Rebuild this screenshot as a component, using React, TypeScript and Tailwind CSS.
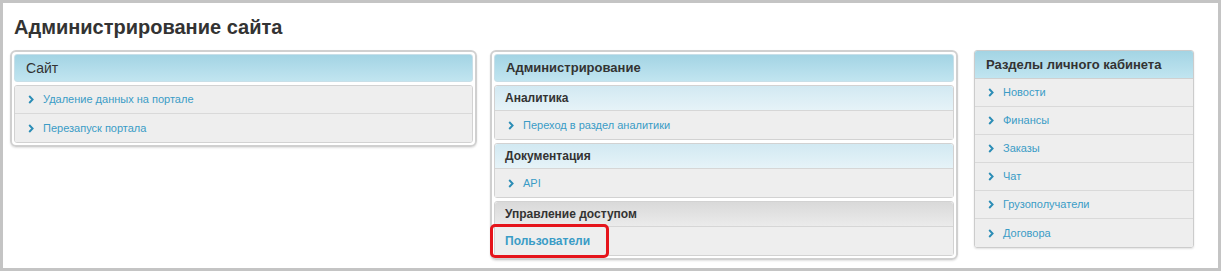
import React from 'react'

type LinkRowProps = {
    label: string;
    last?: boolean;
}

function Chevron() {
    return (
        <svg width="6" height="9" viewBox="0 0 6 9" className="shrink-0">
            <polyline points="1.2,1 4.6,4.5 1.2,8" fill="none" stroke="#2b8db6" strokeWidth="1.9" />
        </svg>
    )
}

function LinkRow({ label, last }: LinkRowProps) {
    return (
        <div
            className={
                last
                    ? "h-[28px] flex items-center pl-[13px] gap-[9px] bg-[#eeeeee]"
                    : "h-[28px] flex items-center pl-[13px] gap-[9px] bg-[#eeeeee] border-b border-[#d9d9d9] shadow-[0_1px_0_#ffffff]"
            }
        >
            <Chevron />
            <span className="text-[11px] text-[#3a9cc6] leading-none">{label}</span>
        </div>
    )
}

function MainHeader({ title, bold }: { title: string; bold?: boolean }) {
    return (
        <div className="h-[28px] flex items-center px-[11px] rounded-[3px] border border-[#c8dfe8] bg-gradient-to-b from-[#a3d4e4] to-[#c1e5f0]">
            <span className={bold ? "text-[13px] font-bold text-[#333333]" : "text-[14px] text-[#333333]"}>
                {title}
            </span>
        </div>
    )
}

function Group({ title, tone, children }: { title: string; tone: 'blue' | 'gray'; children: React.ReactNode }) {
    return (
        <div className="rounded-[3px] border border-[#d2d2d2] overflow-visible">
            <div
                className={
                    tone === 'blue'
                        ? "h-[25px] flex items-center px-[10px] rounded-t-[3px] bg-gradient-to-b from-[#d2e9f2] to-[#e6f3f8] border-b border-[#d6d6d6]"
                        : "h-[25px] flex items-center px-[10px] rounded-t-[3px] bg-gradient-to-b from-[#d9d9d9] to-[#ebebeb] border-b border-[#d6d6d6]"
                }
            >
                <span className="text-[12px] font-bold text-[#333333]">{title}</span>
            </div>
            {children}
        </div>
    )
}

export default function App() {
    const cabinet = ['Новости', 'Финансы', 'Заказы', 'Чат', 'Грузополучатели', 'Договора']

    return (
        <div
            className="w-[1221px] h-[271px] bg-white border-[3px] border-[#c4c4c4] overflow-hidden"
            style={{ fontFamily: '"Liberation Sans", Arial, sans-serif' }}
        >
            {/* Page title */}
            <div className="pt-[12px] pl-[11px] h-[47px]">
                <h1 className="text-[20px] leading-[24px] font-bold text-[#333333]">Администрирование сайта</h1>
            </div>

            <div className="flex items-start pl-[7px]">
                {/* Site */}
                <div className="w-[467px] border-2 border-[#d0d0d0] rounded-[6px] p-[2px] shadow-[0_1px_2px_rgba(0,0,0,0.12)]">
                    <MainHeader title="Сайт" />
                    <div className="mt-[3px] rounded-[3px] border border-[#d2d2d2] overflow-hidden">
                        <LinkRow label="Удаление данных на портале" />
                        <LinkRow label="Перезапуск портала" last />
                    </div>
                </div>

                {/* Administration */}
                <div className="ml-[13px] w-[468px] border-2 border-[#d0d0d0] rounded-[6px] p-[2px] flex flex-col gap-[3px] shadow-[0_1px_2px_rgba(0,0,0,0.12)]">
                    <MainHeader title="Администрирование" bold />
                    <Group title="Аналитика" tone="blue">
                        <LinkRow label="Переход в раздел аналитики" last />
                    </Group>
                    <Group title="Документация" tone="blue">
                        <LinkRow label="API" last />
                    </Group>
                    <Group title="Управление доступом" tone="gray">
                        <div className="relative h-[28px] flex items-center pl-[10px] bg-[#eeeeee]">
                            <span className="text-[12px] font-bold text-[#3a9cc6]">Пользователи</span>
                            <div className="absolute left-[-5px] top-[-3px] w-[119px] h-[34px] border-[3px] border-[#e5141b] rounded-[5px]" />
                        </div>
                    </Group>
                </div>

                {/* Personal cabinet */}
                <div className="ml-[16px] w-[220px] rounded-[3px] border border-[#cccccc] overflow-hidden shadow-[0_1px_2px_rgba(0,0,0,0.12)]">
                    <div className="h-[28px] flex items-center px-[11px] bg-gradient-to-b from-[#a3d4e4] to-[#c1e5f0] border-b border-[#d0d0d0]">
                        <span className="text-[13px] font-bold text-[#333333]">Разделы личного кабинета</span>
                    </div>
                    {cabinet.map((item, i) => (
                        <LinkRow key={item} label={item} last={i === cabinet.length - 1} />
                    ))}
                </div>
            </div>
        </div>
    )
}
